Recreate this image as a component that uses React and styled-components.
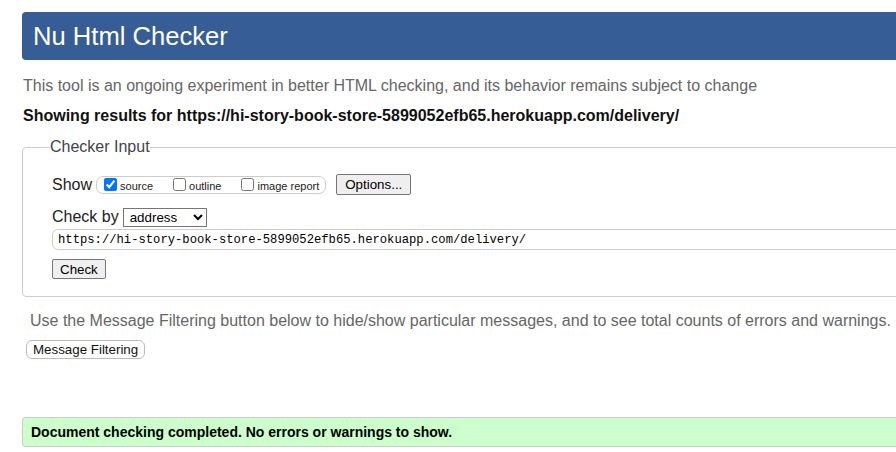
import React from 'react';
import styled, { createGlobalStyle } from 'styled-components';

const GlobalStyle = createGlobalStyle`
  html, body {
    margin: 0;
    padding: 0;
    background: #fff;
    overflow: hidden;
  }
  body {
    font-family: "Liberation Sans", Arial, sans-serif;
    color: #222;
  }
`;

const Page = styled.div`
  width: 1080px;
  padding: 12px 0 0 22px;
  box-sizing: border-box;
`;

const Header = styled.h1`
  margin: 0;
  height: 48px;
  display: flex;
  align-items: center;
  padding-left: 11px;
  background: #365d95;
  border-radius: 4px;
  color: #fff;
  font-size: 25.6px;
  font-weight: 400;
`;

const Intro = styled.p`
  margin: 16px 0 0 1px;
  font-size: 16px;
  line-height: 20px;
  color: #666;
`;

const Results = styled.p`
  margin: 10px 0 0 1px;
  font-size: 16px;
  line-height: 20px;
  font-weight: 700;
  color: #111;
`;

const Fieldset = styled.fieldset`
  margin: 12px 0 0;
  padding: 18px 29px 17px;
  border: 1px solid #ccc;
  border-radius: 4px;
  display: flex;
  flex-direction: column;
`;

const Legend = styled.legend`
  padding: 0;
  margin-left: -2px;
  font-size: 16px;
  line-height: 18px;
  color: #444;
`;

const Row = styled.div`
  display: flex;
  align-items: center;
  margin-top: ${(p) => p.$gap || 0}px;
`;

const Label = styled.span`
  font-size: 16px;
  line-height: 20px;
  color: #222;
  margin-right: ${(p) => p.$space || 4}px;
`;

const ShowGroup = styled.div`
  display: flex;
  align-items: center;
  gap: 20px;
  height: 16px;
  padding: 0 6px 0 7px;
  border: 1px solid #ccc;
  border-radius: 7px;
`;

const CheckItem = styled.label`
  display: flex;
  align-items: center;
  font-size: 11px;
  color: #222;

  input {
    width: 13px;
    height: 13px;
    margin: 0 3px 0 0;
  }

  span {
    padding-top: 2px;
  }
`;

const Button = styled.button`
  font-family: "Liberation Sans", Arial, sans-serif;
  font-size: 13.33px;
  line-height: 17px;
  color: #000;
  background: #efefef;
  border: 1px solid #767676;
  border-radius: 2px;
  padding: 1px 8px;
  margin-left: ${(p) => p.$offset || 0}px;
`;

const Select = styled.select`
  width: 84px;
  height: 19px;
  font-family: "Liberation Sans", Arial, sans-serif;
  font-size: 13.33px;
  color: #000;
  border: 1px solid #767676;
  border-radius: 0;
  background: #fff;
  padding: 0 2px;
`;

const UrlInput = styled.input`
  width: 100%;
  height: 21px;
  box-sizing: border-box;
  margin-top: 2px;
  padding: 0 5px;
  border: 1px solid #ccc;
  border-radius: 6px;
  font-family: "Liberation Mono", "DejaVu Sans Mono", monospace;
  font-size: 12.2px;
  color: #000;
  outline: none;
`;

const CheckButton = styled(Button)`
  align-self: flex-start;
  margin-top: 9px;
  height: 20px;
  padding: 0 7px;
`;

const FilterNote = styled.p`
  margin: 14px 0 0 8px;
  font-size: 16px;
  line-height: 20px;
  color: #666;
`;

const FilterButton = styled.button`
  display: block;
  margin: 9px 0 0 4px;
  height: 19px;
  padding: 0 6px;
  font-family: "Liberation Sans", Arial, sans-serif;
  font-size: 13.33px;
  line-height: 16px;
  color: #111;
  background: #fff;
  border: 1px solid #bbb;
  border-radius: 6px;
`;

const Success = styled.div`
  margin-top: 58px;
  height: 28px;
  display: flex;
  align-items: center;
  padding-left: 8px;
  background: #ccffcc;
  border: 1px solid #ccc;
  border-radius: 3px;
  font-size: 14px;
  font-weight: 700;
  color: #000;
`;

const url = 'https://hi-story-book-store-5899052efb65.herokuapp.com/delivery/';

const App = () => (
  <>
    <GlobalStyle />
    <Page>
      <Header>Nu Html Checker</Header>
      <Intro>
        This tool is an ongoing experiment in better HTML checking, and its behavior remains subject to change
      </Intro>
      <Results>Showing results for {url}</Results>

      <Fieldset>
        <Legend>Checker Input</Legend>
        <Row>
          <Label $space={4}>Show</Label>
          <ShowGroup>
            <CheckItem>
              <input type="checkbox" defaultChecked />
              <span>source</span>
            </CheckItem>
            <CheckItem>
              <input type="checkbox" />
              <span>outline</span>
            </CheckItem>
            <CheckItem>
              <input type="checkbox" />
              <span>image report</span>
            </CheckItem>
          </ShowGroup>
          <Button $offset={10}>Options...</Button>
        </Row>
        <Row $gap={12}>
          <Label $space={4}>Check by</Label>
          <Select defaultValue="address">
            <option value="address">address</option>
            <option value="file">file upload</option>
            <option value="text">text input</option>
          </Select>
        </Row>
        <UrlInput defaultValue={url} />
        <CheckButton>Check</CheckButton>
      </Fieldset>

      <FilterNote>
        Use the Message Filtering button below to hide/show particular messages, and to see total counts of errors and warnings.
      </FilterNote>
      <FilterButton>Message Filtering</FilterButton>

      <Success>Document checking completed. No errors or warnings to show.</Success>
    </Page>
  </>
);

export default App;
